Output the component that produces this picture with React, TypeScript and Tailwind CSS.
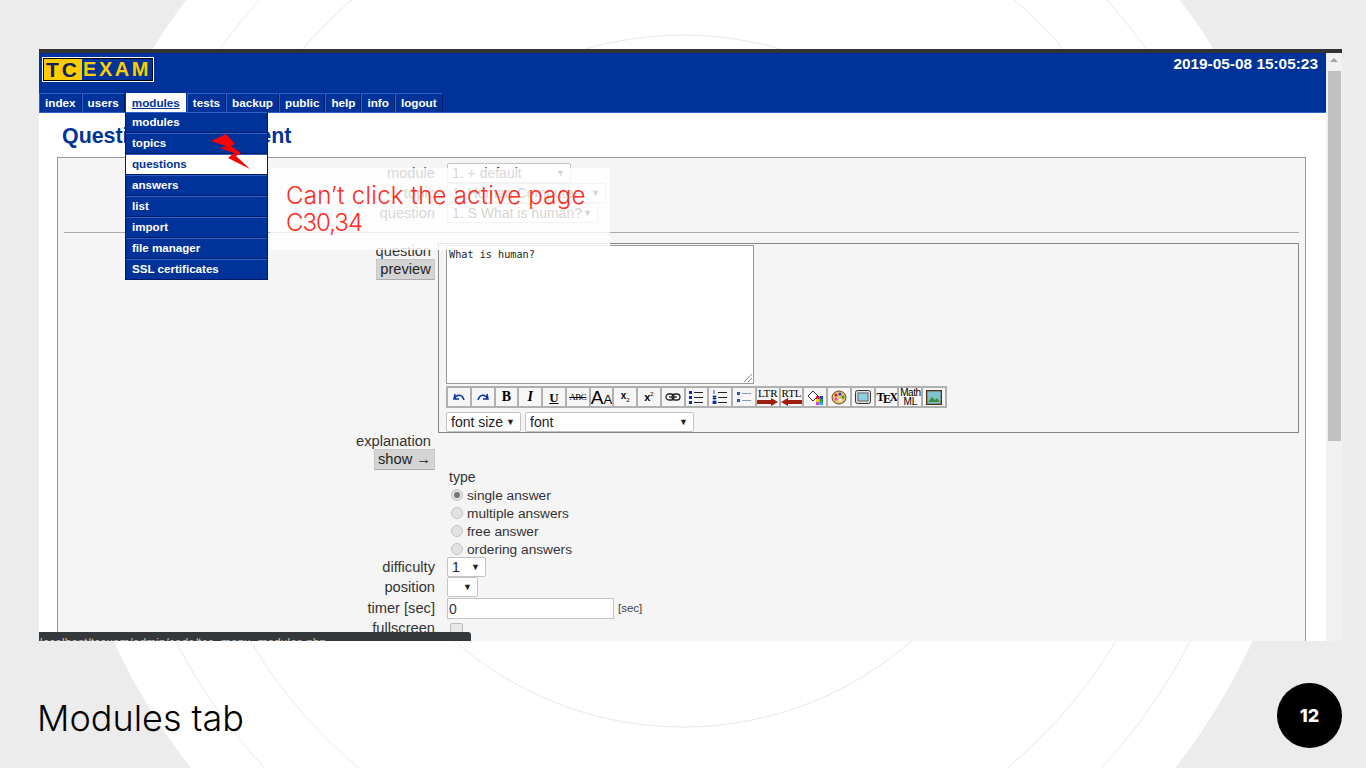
import { ReactNode } from "react";

const sans = "font-['Liberation_Sans',Arial,sans-serif]";

const navItems = ["index", "users", "modules", "tests", "backup", "public", "help", "info", "logout"];
const menuItems = ["modules", "topics", "questions", "answers", "list", "import", "file manager", "SSL certificates"];
const answerTypes = ["single answer", "multiple answers", "free answer", "ordering answers"];

const Select = ({ text, className }: { text: string; className: string }) => (
  <div className={`h-[20px] bg-white border border-[#c4c4c4] rounded-[2px] flex items-center justify-between pl-[4px] pr-[5px] text-[14px] leading-none text-[#222] ${className}`}>
    <span className="whitespace-nowrap">{text}</span>
    <span className="text-[9px] text-[#222]">▼</span>
  </div>
);

const Row = ({ label, children, className = "" }: { label: string; children: ReactNode; className?: string }) => (
  <div className={`flex items-center ${className}`}>
    <span className="w-[377px] shrink-0 text-right text-[14.67px] leading-none text-[#333]">{label}</span>
    <div className="ml-[12px] flex items-center">{children}</div>
  </div>
);

const Btn = ({ children, className = "" }: { children: ReactNode; className?: string }) => (
  <div className={`flex items-center justify-center overflow-hidden bg-[#f6f6f6] border-r-2 border-[#b0b0b0] ${className}`}>{children}</div>
);

const Toolbar = () => (
  <div className="grid grid-cols-[repeat(21,1fr)] w-[501px] h-[22px] border-2 border-r-0 border-[#b0b0b0] bg-[#f6f6f6] text-black">
    <Btn>
      <svg width="14" height="12" viewBox="0 0 14 12" fill="none" stroke="#0a2fa8" strokeWidth="1.5"><path d="M3 3 L2 8 L7 8 M2.5 7.5 C5 3 10 3 12 9" /></svg>
    </Btn>
    <Btn>
      <svg width="14" height="12" viewBox="0 0 14 12" fill="none" stroke="#0a2fa8" strokeWidth="1.5"><path d="M11 3 L12 8 L7 8 M11.5 7.5 C9 3 4 3 2 9" /></svg>
    </Btn>
    <Btn><span className="font-['Liberation_Serif'] font-bold text-[14px] leading-none">B</span></Btn>
    <Btn><span className="font-['Liberation_Serif'] font-bold italic text-[14px] leading-none">I</span></Btn>
    <Btn><span className="font-['Liberation_Serif'] font-bold underline text-[13px] leading-none">U</span></Btn>
    <Btn><span className="font-['Liberation_Serif'] line-through text-[9px] leading-none tracking-[-0.5px]">ABC</span></Btn>
    <Btn><span className="text-[19px] leading-none">A<span className="text-[13px]">A</span></span></Btn>
    <Btn><span className="font-bold text-[10px] leading-none">x<span className="text-[6px] font-normal align-sub">2</span></span></Btn>
    <Btn><span className="font-bold text-[11px] leading-none">x<span className="text-[6px] font-normal align-super">2</span></span></Btn>
    <Btn>
      <svg width="16" height="10" viewBox="0 0 16 10" fill="none" stroke="#222" strokeWidth="1.3"><rect x="1" y="2" width="8" height="6" rx="3" /><rect x="7" y="2" width="8" height="6" rx="3" /><path d="M4 5h8" /></svg>
    </Btn>
    <Btn>
      <svg width="16" height="14" viewBox="0 0 16 14"><path d="M1 1h3v3H1zM1 6h3v3H1zM1 11h3v3H1z" fill="#0a2fa8" /><path d="M6 2.5h9M6 7.5h9M6 12.5h9" stroke="#222" strokeWidth="1.2" /></svg>
    </Btn>
    <Btn>
      <svg width="16" height="14" viewBox="0 0 16 14"><path d="M2 0v4M1 6h3v1H1zM1 8h3v1H1zM1 11h3v3H1z" stroke="#0a2fa8" fill="#0a2fa8" strokeWidth="0.8" /><path d="M6 2.5h9M6 7.5h9M6 12.5h9" stroke="#222" strokeWidth="1.2" /></svg>
    </Btn>
    <Btn>
      <svg width="16" height="12" viewBox="0 0 16 12"><path d="M1 1h3v3H1zM1 8h3v3H1z" fill="#2a52b8" /><path d="M6 2.5h9M6 9.5h9" stroke="#8a9ab8" strokeWidth="1.2" /></svg>
    </Btn>
    <Btn className="flex-col">
      <span className="font-['Liberation_Serif'] text-[11px] leading-[10px]">LTR</span>
      <svg width="21" height="8" viewBox="0 0 21 8"><path d="M0 2h14V0l7 4-7 4V6H0z" fill="#a01c0c" /></svg>
    </Btn>
    <Btn className="flex-col">
      <span className="font-['Liberation_Serif'] text-[11px] leading-[10px]">RTL</span>
      <svg width="21" height="8" viewBox="0 0 21 8"><path d="M21 2H7V0L0 4l7 4V6h14z" fill="#a01c0c" /></svg>
    </Btn>
    <Btn>
      <svg width="16" height="15" viewBox="0 0 16 15"><path d="M1 6l5-5 5 5-5 5z" fill="#fff" stroke="#333" /><path d="M9 6h3.5v3H9z" fill="#e02020" /><path d="M12.5 6H16v3h-3.5z" fill="#2040d0" /><path d="M9 9h3.5v3H9z" fill="#f0d020" /><path d="M12.5 9H16v3h-3.5z" fill="#20a040" /><path d="M9 12h3.5v3H9z" fill="#e040d0" /><path d="M12.5 12H16v3h-3.5z" fill="#20b0d0" /></svg>
    </Btn>
    <Btn>
      <svg width="16" height="15" viewBox="0 0 16 15"><ellipse cx="8" cy="7.5" rx="7" ry="6.5" fill="#e8c070" stroke="#6a4a20" /><circle cx="5" cy="5" r="1.5" fill="#d02020" /><circle cx="9" cy="4" r="1.5" fill="#2040d0" /><circle cx="12" cy="7" r="1.5" fill="#20a040" /><circle cx="5" cy="9" r="1.5" fill="#e040d0" /><circle cx="9" cy="10" r="1.5" fill="#fff" /></svg>
    </Btn>
    <Btn>
      <svg width="16" height="14" viewBox="0 0 16 14"><rect x="0.5" y="0.5" width="15" height="13" rx="2" fill="#ddd" stroke="#333" /><rect x="3" y="3" width="10" height="8" fill="#8fd0e0" stroke="#666" /></svg>
    </Btn>
    <Btn><span className="font-['Liberation_Serif'] font-bold text-[12px] leading-none tracking-[-1.5px] whitespace-nowrap">T<span className="relative top-[2px]">E</span>X</span></Btn>
    <Btn className="flex-col"><span className="text-[10px] leading-[9px] tracking-[-0.5px]">Math</span><span className="text-[10px] leading-[9px]">ML</span></Btn>
    <Btn>
      <svg width="16" height="15" viewBox="0 0 16 15"><rect x="0.5" y="0.5" width="15" height="14" fill="#7dc4d0" stroke="#5a3010" strokeWidth="1.6" /><path d="M2 12l4-5 3 3 2-2 3 4z" fill="#3f8f3f" /></svg>
    </Btn>
  </div>
);

export default function App() {
  return (
    <div className={`relative w-[1366px] h-[768px] overflow-hidden bg-[#ececec] ${sans}`}>
      {/* slide background */}
      <svg className="absolute inset-0" width="1366" height="768" viewBox="0 0 1366 768" fill="none">
        <circle cx="683" cy="381" r="626" fill="#fff" />
        <circle cx="683" cy="381" r="570" stroke="#e8e8e8" strokeWidth="1" />
        <circle cx="683" cy="381" r="505" stroke="#e8e8e8" strokeWidth="1" />
        <circle cx="683" cy="381" r="346" stroke="#e8e8e8" strokeWidth="1" />
      </svg>

      <div className="relative flex flex-col pt-[49px] h-full">
        {/* browser capture */}
        <div className="relative ml-[39px] w-[1303px] h-[592px] overflow-hidden flex flex-col bg-white">
          <div className="h-[4px] bg-[#333] shrink-0" />
          <div className="flex flex-1 min-h-0">
            <div className="flex-1 min-w-0 flex flex-col">
              <header className="h-[60px] shrink-0 bg-[#003399] flex flex-col justify-between">
                <div className="flex justify-between">
                  <div className="ml-[3px] mt-[4px] w-[112px] h-[25px] border border-white bg-black p-[1px] flex">
                    <span className="w-[38px] bg-[#ffcc00] text-[#102060] font-bold text-[21px] leading-[21px] tracking-[3px] text-center">TC</span>
                    <span className="flex-1 bg-[#003399] text-[#ffcc00] font-bold text-[20px] leading-[21px] tracking-[2.5px] text-center whitespace-nowrap">EXAM</span>
                  </div>
                  <span className="mr-[8px] mt-[2px] text-white font-bold text-[15.4px] leading-[18px]">2019-05-08 15:05:23</span>
                </div>
                <nav className="flex h-[20px] border-b border-[#2e62c8]">
                  {navItems.map((item) =>
                    item === "modules" ? (
                      <span key={item} className="px-[6px] mx-[1px] bg-white text-[#003399] underline font-bold text-[11.7px] leading-[19px]">{item}</span>
                    ) : (
                      <span key={item} className="px-[5px] bg-[#003399] border-t border-l border-t-[#2e62c8] border-l-[#2e62c8] border-r border-r-[#001a66] text-white font-bold text-[11.7px] leading-[18px]">{item}</span>
                    ),
                  )}
                </nav>
              </header>

              <div className="flex-1 min-h-0 overflow-hidden pl-[18px] pr-[20px]">
                <h1 className="ml-[5px] mt-[10px] text-[#003399] font-bold text-[21.4px] leading-[27px] whitespace-nowrap">Question Management</h1>
                <div className="mt-[7px] h-[600px] border border-[#999] bg-[#f5f5f5] pt-[5px]">
                  <div className="flex flex-col">
                    <Row label="module"><Select text="1. + default" className="w-[124px] text-[#333]" /></Row>
                    <Row label="topic"><Select text="1. Human Computer" className="w-[159px]" /></Row>
                    <Row label="question"><Select text="1. S What is human?" className="w-[151px]" /></Row>
                  </div>
                  <div className="mx-[6px] mt-[9px] border-t border-[#aaa]" />
                  <div className="flex mt-[10px]">
                    <div className="w-[377px] shrink-0 flex flex-col items-end">
                      <span className="mr-[4px] h-[16px] overflow-hidden text-[14.67px] leading-[16px] text-[#333]">question</span>
                      <span className="w-[59px] h-[21px] bg-[#d4d4d4] border border-[#c8c8c8] border-b-[#aaa] text-center text-[14.67px] leading-[19px] text-[#222]">preview</span>
                    </div>
                    <div className="ml-[3px] mr-[6px] flex-1 h-[190px] border border-[#888] pl-[7px] pt-[1px]">
                      <div className="relative w-[308px] h-[139px] bg-white border border-[#999] px-[2px] py-[3px] font-['DejaVu_Sans_Mono',monospace] text-[10.2px] leading-[12px] text-[#222]">
                        What is human?
                        <svg className="absolute right-[1px] bottom-[1px]" width="9" height="9" viewBox="0 0 9 9" stroke="#888"><path d="M1 9 L9 1 M5 9 L9 5" /></svg>
                      </div>
                      <div className="mt-[2px]"><Toolbar /></div>
                      <div className="mt-[4px] flex gap-[4px]">
                        <Select text="font size" className="w-[75px]" />
                        <Select text="font" className="w-[169px]" />
                      </div>
                    </div>
                  </div>

                  <div className="flex flex-col items-end w-[377px]">
                    <span className="mr-[4px] h-[16px] overflow-hidden text-[14.67px] leading-[16px] text-[#333]">explanation</span>
                    <span className="w-[61px] h-[21px] bg-[#d4d4d4] border border-[#c8c8c8] border-b-[#aaa] text-center text-[14.67px] leading-[19px] text-[#222]">show →</span>
                  </div>

                  <div className="ml-[391px] mt-[-2px] text-[13.7px] leading-[18px] text-[#333]">
                    <div className="text-[14px] mb-[1px]">type</div>
                    {answerTypes.map((t, i) => (
                      <div key={t} className="flex items-center">
                        <span className="ml-[2px] mt-[-3px] w-[12px] h-[12px] rounded-full bg-[#e2e2e2] border border-[#c4c4c4] flex items-center justify-center">
                          {i === 0 && <span className="w-[6px] h-[6px] rounded-full bg-[#777]" />}
                        </span>
                        <span className="ml-[4px]">{t}</span>
                      </div>
                    ))}
                  </div>
                  <div className="flex flex-col mt-[-2px]">
                    <Row label="difficulty"><Select text="1" className="w-[39px]" /></Row>
                    <Row label="position"><Select text="" className="w-[31px]" /></Row>
                    <Row label="timer [sec]" className="mt-[1px]">
                      <div className="w-[167px] h-[21px] bg-white border border-[#c4c4c4] pl-[1px] text-[14px] leading-[20px] text-[#333]">0</div>
                      <span className="ml-[4px] text-[11.5px] text-[#444]">[sec]</span>
                    </Row>
                    <Row label="fullscreen" className="mt-[2px]">
                      <span className="ml-[3px] mt-[2px] w-[13px] h-[13px] bg-[#e8e8e8] border border-[#bbb] rounded-[2px]" />
                    </Row>
                  </div>
                </div>
              </div>
            </div>
            {/* scrollbar */}
            <div className="w-[16px] shrink-0 bg-[#f1f1f1] flex flex-col items-center">
              <span className="mt-[5px] w-0 h-0 border-x-[4px] border-x-transparent border-b-[4px] border-b-[#a3a3a3]" />
              <span className="mt-[9px] w-[13px] h-[370px] bg-[#c1c1c1]" />
            </div>
          </div>

          {/* status bubble */}
          <div className="absolute left-0 bottom-0 w-[432px] h-[9px] overflow-hidden rounded-tr-[3px] bg-[#35383b] text-[#c8c8c8] text-[12px] leading-[16px] whitespace-nowrap pl-[1px] pt-[3px]">
            localhost/tcexam/admin/code/tce_menu_modules.php
          </div>

          {/* open modules menu */}
          <div className="absolute left-[86px] top-[63px] w-[143px] h-[168px] overflow-hidden border-x border-b border-[#001a66] bg-[#003399]">
            {menuItems.map((item) => (
              <div
                key={item}
                className={`h-[21px] pl-[6px] border-b border-b-[#001a66] border-t border-t-[#2e62c8] text-[11.6px] leading-[18px] font-bold ${item === "questions" ? "bg-white text-[#003399]" : "text-white"}`}
              >
                {item}
              </div>
            ))}
          </div>
        </div>

        {/* slide footer */}
        <div className="flex-1 flex justify-between pl-[37px] pr-[24px]">
          <span className="mt-[55px] h-[44px] text-black font-['Inter',sans-serif] font-light text-[36px] leading-[44px]">Modules tab</span>
          <span className="mt-[42px] w-[65px] h-[65px] rounded-full bg-black text-white flex items-center justify-center font-['Inter',sans-serif] font-extrabold text-[18px]">12</span>
        </div>
      </div>

      {/* annotation over the capture */}
      <div className="absolute left-[270px] top-[168px] w-[340px] h-[82px] bg-white/80 pl-[16px] pt-[14px] text-[#ff2a1a] font-['Inter',sans-serif] font-light text-[24px] leading-[27px]">
        <div className="whitespace-nowrap tracking-[0.25px]">Can’t click the active page</div>
        <div className="tracking-[-1px]">C30,34</div>
      </div>
      <svg className="absolute left-[205px] top-[130px]" width="50" height="42" viewBox="205 130 50 42">
        <polygon points="211,141 226,134 235,144 231,146 241,153 236,156 250,169 228,158 234,153 220,148 226,146" fill="#ff0000" />
      </svg>
    </div>
  );
}
